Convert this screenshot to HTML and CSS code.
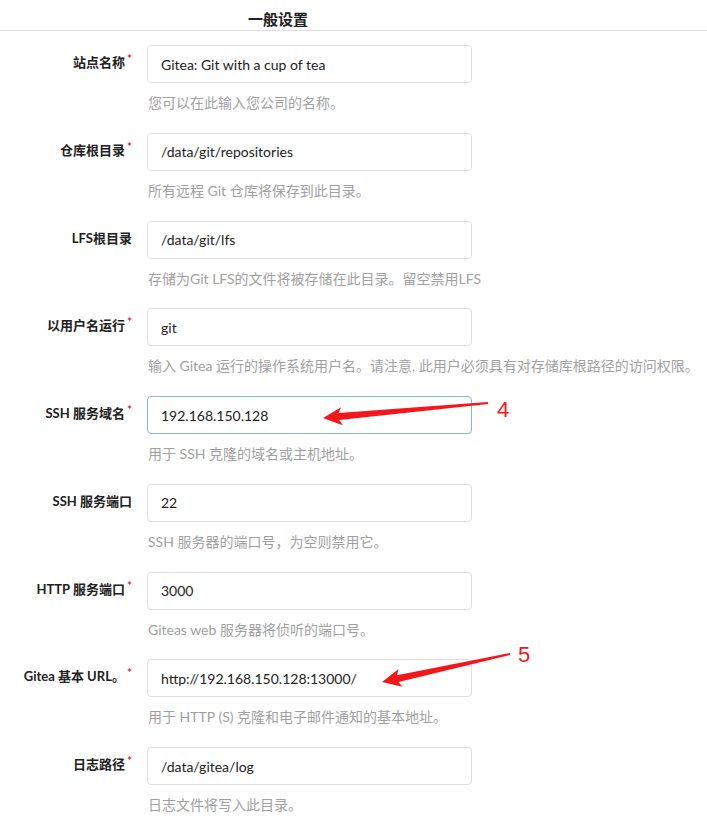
FILE: index.html
```html
<!DOCTYPE html>
<html lang="zh-CN">
<head>
  <meta charset="UTF-8">
  <title>Gitea 安装 - 一般设置</title>
  <link rel="stylesheet" href="styles.css">
</head>
<body>
  <div class="page">
    <h4 class="section-header">一般设置</h4>

    <form class="install-form">
      <div class="field required">
        <label>站点名称</label>
        <input type="text" value="Gitea: Git with a cup of tea">
        <span class="help">您可以在此输入您公司的名称。</span>
      </div>

      <div class="field required">
        <label>仓库根目录</label>
        <input type="text" value="/data/git/repositories">
        <span class="help">所有远程 Git 仓库将保存到此目录。</span>
      </div>

      <div class="field">
        <label>LFS根目录</label>
        <input type="text" value="/data/git/lfs">
        <span class="help">存储为Git LFS的文件将被存储在此目录。留空禁用LFS</span>
      </div>

      <div class="field required">
        <label>以用户名运行</label>
        <input type="text" value="git">
        <span class="help">输入 Gitea 运行的操作系统用户名。请注意, 此用户必须具有对存储库根路径的访问权限。</span>
      </div>

      <div class="field required">
        <label>SSH 服务域名</label>
        <input type="text" class="focused" value="192.168.150.128">
        <span class="help">用于 SSH 克隆的域名或主机地址。</span>
      </div>

      <div class="field">
        <label>SSH 服务端口</label>
        <input type="text" value="22">
        <span class="help">SSH 服务器的端口号，为空则禁用它。</span>
      </div>

      <div class="field required">
        <label>HTTP 服务端口</label>
        <input type="text" value="3000">
        <span class="help">Giteas web 服务器将侦听的端口号。</span>
      </div>

      <div class="field required">
        <label>Gitea 基本 URL。</label>
        <input type="text" value="http://192.168.150.128:13000/">
        <span class="help">用于 HTTP (S) 克隆和电子邮件通知的基本地址。</span>
      </div>

      <div class="field required">
        <label>日志路径</label>
        <input type="text" value="/data/gitea/log">
        <span class="help">日志文件将写入此目录。</span>
      </div>
    </form>

    <!-- red annotation arrows drawn over the screenshot -->
    <svg class="annotations" width="707" height="834" viewBox="0 0 707 834">
      <polygon points="487.9,402.0 338.6,413.1 341.1,407.3 323,418 342.7,425.3 339.2,420.0 488.1,404.0" />
      <text x="497" y="417">4</text>
      <polygon points="509.8,653.0 396.9,675.2 398.6,669.1 382,682 402.4,686.7 398.4,682.0 510.2,655.0" />
      <text x="518" y="662">5</text>
    </svg>
  </div>
</body>
</html>
```

FILE: styles.css
```css
body {
  margin: 0;
  padding: 0;
  background: #fff;
  color: #212121;
  font-family: Lato, "Noto Sans CJK SC", sans-serif;
  font-size: 14px;
}

.page {
  position: relative;
  width: 707px;
  min-height: 834px;
}

.section-header {
  margin: 0 0 14px 0;
  padding: 9px 0 1px 248px;
  font-size: 15px;
  line-height: 20px;
  font-weight: bold;
  color: #212121;
  border-bottom: 1px solid #dedede;
}

.install-form {
  margin: 0;
}

.field {
  display: grid;
  grid-template-columns: 132px 325px;
  column-gap: 15px;
  margin-bottom: 19.75px;
}

.field label {
  grid-column: 1;
  grid-row: 1;
  text-align: right;
  font-size: 13px;
  line-height: 18px;
  font-weight: bold;
  color: #212121;
  padding-top: 8px;
}

.field.required label::after {
  content: "*";
  color: #db2828;
  font-size: 12px;
  margin-left: 2px;
  vertical-align: top;
  position: relative;
  top: -3px;
}

.field input {
  grid-column: 2;
  grid-row: 1;
  box-sizing: border-box;
  width: 325px;
  height: 38px;
  margin: 0;
  padding: 0 13px;
  font-family: Lato, "Noto Sans CJK SC", sans-serif;
  font-size: 14px;
  color: #212121;
  background: #fff;
  border: 1px solid #dedede;
  border-radius: 4px;
  outline: none;
}

.field input.focused {
  border-color: #85b7d9;
}

.field .help {
  grid-column: 2;
  grid-row: 2;
  margin-top: 10px;
  padding-left: 1px;
  font-size: 14px;
  line-height: 20px;
  color: #a0a0a0;
  white-space: nowrap;
}

.annotations {
  position: absolute;
  top: 0;
  left: 0;
  pointer-events: none;
}

.annotations polygon {
  fill: #f5161b;
}

.annotations text {
  fill: #f5161b;
  font-family: "Liberation Sans", sans-serif;
  font-size: 22px;
}
```
